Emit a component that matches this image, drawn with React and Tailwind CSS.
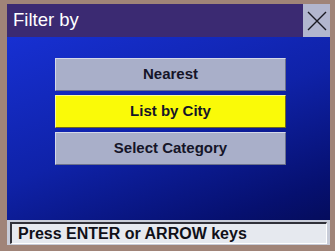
import React from "react";

const font = { fontFamily: '"Liberation Sans", Arial, sans-serif' };

function Btn({ label, active }) {
  return (
    <div
      className={`h-[33px] w-[231px] flex items-center justify-center text-[15px] font-bold text-[#151528] border-t border-l border-r border-b ${
        active
          ? "bg-[#fafa08] border-t-[#fbfb90] border-l-[#fbfb90] border-r-[#706820] border-b-[#706820]"
          : "bg-[#a9afc9] border-t-[#d4d8e8] border-l-[#d4d8e8] border-r-[#6a708c] border-b-[#6a708c]"
      }`}
    >
      {label}
    </div>
  );
}

export default function App() {
  return (
    <div
      className="w-[335px] h-[251px] bg-[#a08478] pt-[4px] pl-[7px] pr-[5px] pb-[6px] flex flex-col"
      style={font}
    >
      <div className="h-[33px] flex bg-[#3b2a72]">
        <div className="flex-1 flex items-center pl-[6px] text-white text-[18.5px] leading-none">
          Filter by
        </div>
        <div className="w-[27px] h-[33px] bg-[#b2b6ce] flex items-center justify-center">
          <svg width="22" height="22" viewBox="0 0 22 22">
            <path d="M2 2 L20 20 M20 2 L2 20" stroke="#1a1a22" strokeWidth="1.4" fill="none" />
          </svg>
        </div>
      </div>
      <div className="flex-1 flex flex-col bg-[linear-gradient(160deg,#1730d2_0%,#0f22a8_45%,#061070_80%,#040a50_100%)]">
        <div className="flex-1 flex flex-col gap-[4px] pt-[21px] pl-[48px]">
          <Btn label="Nearest" />
          <Btn label="List by City" active />
          <Btn label="Select Category" />
        </div>
        <div className="h-[25px] px-[3px] pb-[1px] pt-[2px] bg-[#c8ccd8]">
          <div className="h-full bg-[#e6e9ef] border-t-2 border-l-2 border-t-[#303038] border-l-[#303038] border-r border-b border-r-[#ffffff] border-b-[#ffffff] flex items-center pl-[6px] text-[16px] font-bold text-[#101018] leading-none">
            Press ENTER or ARROW keys
          </div>
        </div>
      </div>
    </div>
  );
}
